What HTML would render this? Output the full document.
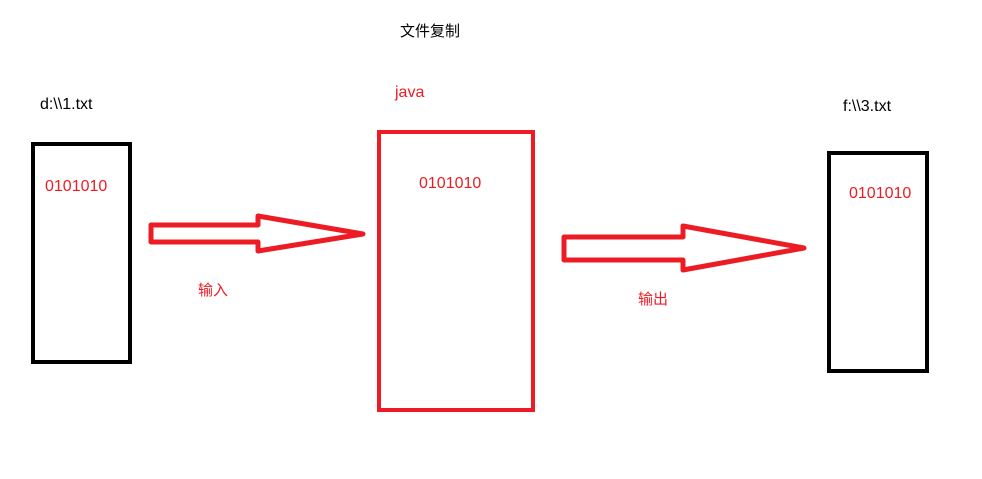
<!DOCTYPE html>
<html><head><meta charset="utf-8"><style>
body{margin:0;width:982px;height:479px;background:#fff;overflow:hidden;position:relative;font-family:"Liberation Sans","Noto Sans CJK SC",sans-serif;font-size:16px}
.t{position:absolute;line-height:1;white-space:nowrap}
.r{color:#ed1c24}
.c{font-size:15px}
</style></head><body>
<svg width="982" height="479" style="position:absolute;left:0;top:0">
<rect x="33" y="144" width="97" height="218" fill="none" stroke="#000" stroke-width="4"/>
<rect x="379" y="132" width="154" height="278" fill="none" stroke="#ed1c24" stroke-width="4"/>
<rect x="829" y="153" width="98" height="218" fill="none" stroke="#000" stroke-width="4"/>
<polygon points="151,225 258,225 258,216 363,234 258,251 258,242 151,242" fill="none" stroke="#ed1c24" stroke-width="5" stroke-linejoin="round"/>
<polygon points="564,237 683,237 683,226 804,248 683,270 683,260 564,260" fill="none" stroke="#ed1c24" stroke-width="5" stroke-linejoin="round"/>
</svg>
<div class="t c" style="left:400px;top:24px">文件复制</div>
<div class="t r" style="left:395px;top:85px">java</div>
<div class="t" style="left:40px;top:97px">d:\\1.txt</div>
<div class="t" style="left:843px;top:99px">f:\\3.txt</div>
<div class="t r" style="left:45px;top:179px">0101010</div>
<div class="t r" style="left:419px;top:176px">0101010</div>
<div class="t r" style="left:849px;top:186px">0101010</div>
<div class="t r c" style="left:198px;top:283px">输入</div>
<div class="t r c" style="left:638px;top:292px">输出</div>
</body></html>
